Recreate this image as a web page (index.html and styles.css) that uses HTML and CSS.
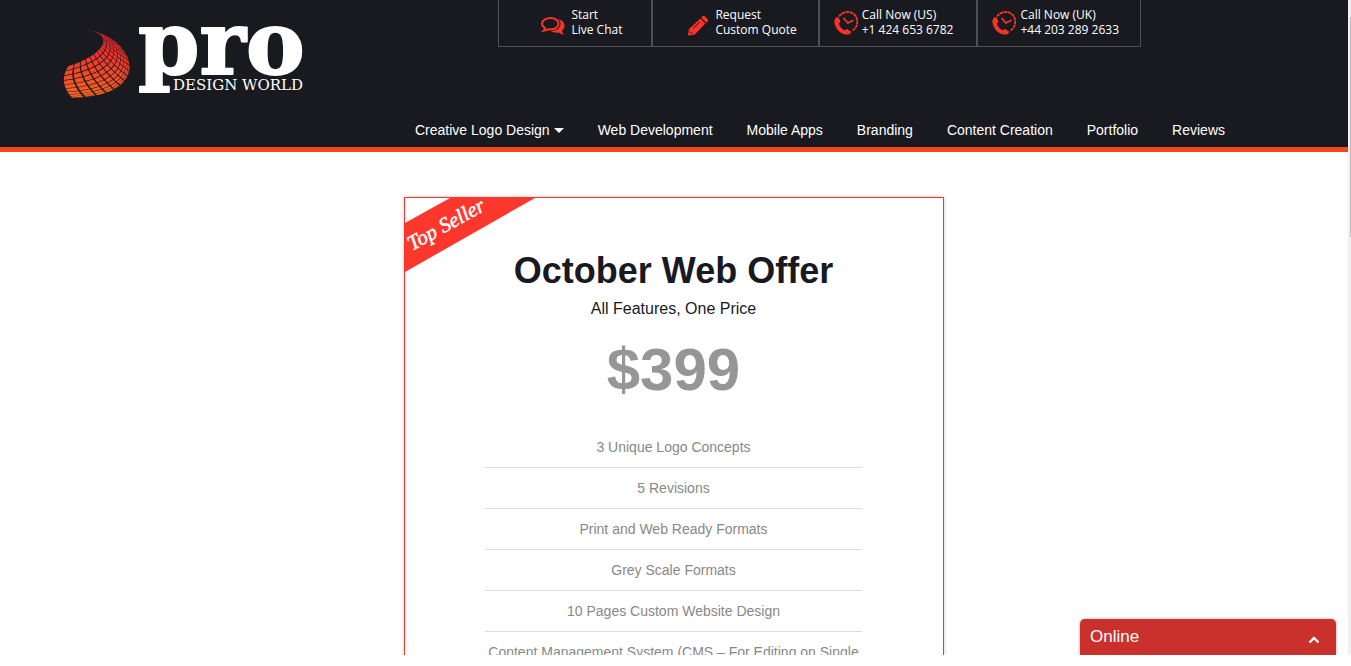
FILE: index.html
```html
<!DOCTYPE html>
<html lang="en">
<head>
<meta charset="utf-8">
<title>Pro Design World</title>
<link rel="stylesheet" href="styles.css">
</head>
<body>
<div class="frame">
  <div class="page">
    <header class="header">
      <a class="logo" href="#" aria-label="Pro Design World">
        <svg class="logo-art" width="250" height="85" viewBox="0 0 250 85">
          <defs>
            <linearGradient id="globe" gradientUnits="userSpaceOnUse" x1="0" y1="10" x2="0" y2="80">
              <stop offset="0" stop-color="#d81f2c"/>
              <stop offset="0.4" stop-color="#f4352a"/>
              <stop offset="1" stop-color="#f46a20"/>
            </linearGradient>
          </defs>
          <path id="globe-cells" fill="url(#globe)"/>
          <text class="logo-pro" x="77" y="54">pro</text>
          <text class="logo-sub" x="112" y="70">DESIGN WORLD</text>
        </svg>
      </a>
      <div class="header-right">
        <div class="contacts">
          <a class="contact contact-chat" href="#">
            <svg width="24" height="20" viewBox="0 0 24 20"><path d="M17 3c4 1 6.500 3.500 6.500 7 0 2-1 3.500-2.500 4.700.2 1.800 1 2.800 2 3.800-2 0-3.700-.6-5-2-3 .6-6 0-8-1.500 6 0 10-3.500 9.500-8C19.300 5.500 18.500 4 17 3z" fill="#fb3327"/><path d="M9.500 2C14 2 17.500 4.400 17.500 7.700S14 13.500 9.500 13.500c-.9 0-1.700-.1-2.500-.3-1.400 1-3 1.500-4.500 1.500 1-.9 1.500-1.700 1.600-2.700C2.200 10.900 1 9.500 1 7.700 1 4.400 5 2 9.500 2z" fill="#191a1f" stroke="#fb3327" stroke-width="2"/></svg>
            <span>Start<br>Live Chat</span>
          </a>
          <a class="contact contact-quote" href="#">
            <svg width="22" height="20" viewBox="0 0 22 20"><path d="m14.300 1.700 5 5 1-1c1-1 1-2 0-3L18 .6c-1-.9-2-.9-3 0zM13.400 2.600 2 13 1 19.500l6.600-.8L18.400 7.600z" fill="#fb3327"/><path d="m6 12.500 7-6.500M3 15.500l2.200 2.200" stroke="#191a1f" stroke-width="1"/></svg>
            <span>Request<br>Custom Quote</span>
          </a>
          <a class="contact contact-us" href="#">
            <svg width="24" height="24" viewBox="0 0 24 24"><use href="#phone-clock"/></svg>
            <span>Call Now (US)<br>+1 424 653 6782</span>
          </a>
          <a class="contact contact-uk" href="#">
            <svg width="24" height="24" viewBox="0 0 24 24"><g id="phone-clock"><path d="M2.200 6.500C.3 8 0 10.500.8 13.500 2.500 18.500 6 22 10.500 23.200c2.500.7 5 .4 6.200-1.200.6-.9.400-1.600-.4-2.100l-2.600-1.500c-.8-.5-1.500-.3-2 .4l-.7.700C8 18.300 5.600 15.600 4.800 12.500l.8-.6c.7-.4.9-1 .6-1.800L5.200 7.400C4.800 6.500 3.300 6 2.200 6.500z" fill="#fb3327"/><path d="M5 5.500C10-1.500 21-.2 23 8.500c1 5-1 9-4.500 11" fill="none" stroke="#fb3327" stroke-width="1.800" stroke-dasharray="3.500 .5"/><path d="m9.500 7 4.300 5 5.700-2.800" fill="none" stroke="#fb3327" stroke-width="1.800"/></g></svg>
            <span>Call Now (UK)<br>+44 203 289 2633</span>
          </a>
        </div>
        <nav class="nav">
          <a class="nav-drop" href="#">Creative Logo Design</a>
          <a href="#">Web Development</a>
          <a href="#">Mobile Apps</a>
          <a href="#">Branding</a>
          <a href="#">Content Creation</a>
          <a href="#">Portfolio</a>
          <a href="#">Reviews</a>
        </nav>
      </div>
    </header>
    <main class="main">
      <section class="offer">
        <svg class="ribbon" width="130" height="75" viewBox="0 0 130 75">
          <path d="M0 25 45 0h85L0 74z" fill="#fd372b"/>
          <text class="ribbon-text" transform="translate(7 53) rotate(-29)">Top Seller</text>
        </svg>
        <h1 class="offer-title">October Web Offer</h1>
        <p class="offer-sub">All Features, One Price</p>
        <p class="offer-price">$399</p>
        <ul class="features">
          <li>3 Unique Logo Concepts</li>
          <li>5 Revisions</li>
          <li>Print and Web Ready Formats</li>
          <li>Grey Scale Formats</li>
          <li>10 Pages Custom Website Design</li>
          <li>Content Management System (CMS – For Editing on Single</li>
        </ul>
      </section>
    </main>
  </div>
  <div class="scrollbar"><div class="scroll-thumb"></div></div>
  <button class="chat" type="button">Online
    <svg width="12" height="8" viewBox="0 0 12 8"><path d="m1.500 6.500 4.500-4.500 4.500 4.500" fill="none" stroke="#fff" stroke-width="2.400"/></svg>
  </button>
</div>
<script src="globe.js"></script>
</body>
</html>
```

FILE: styles.css
```css
* { box-sizing: border-box; }
body {
  margin: 0;
  height: 100vh;
  padding-bottom: 11px;
  background: #fff;
  font-family: "Liberation Sans", Arial, sans-serif;
}
a { color: #fff; text-decoration: none; }
.frame {
  position: relative;
  display: flex;
  height: 100%;
  overflow: hidden;
}
.page { flex: 1; min-width: 0; }
.scrollbar {
  width: 3px;
  padding: 17px 0 0 2px;
  background: #f0f0f0;
}
.scroll-thumb { height: 220px; background: #bdbdbd; }

.header {
  display: flex;
  justify-content: space-between;
  padding: 0 123px 0 61px;
  background: #191a1f;
  border-bottom: 5px solid #f34720;
}
.logo { padding-top: 20px; }
.logo-art { display: block; overflow: visible; }
.logo-pro {
  font: bold 88px "DejaVu Serif", serif;
  fill: #fff;
  stroke: #fff;
  stroke-width: 2px;
  stroke-linejoin: round;
}
.logo-sub { font: 15px "DejaVu Serif", serif; fill: #fff; }
.header-right {
  display: flex;
  flex-direction: column;
  align-items: flex-end;
  justify-content: space-between;
  height: 147px;
}
.contacts {
  display: flex;
  margin-right: 84px;
  border: 1px solid #505054;
  border-width: 0 1px 1px 0;
}
.contact {
  display: flex;
  align-items: center;
  gap: 6px;
  height: 46px;
  padding-bottom: 2px;
  border-left: 2px solid #505054;
  font: 12px/15px "Open Sans", "Noto Sans", sans-serif;
}
.contact-chat { padding-left: 42px; padding-right: 29px; border-left-width: 1px; }
.contact-quote { padding-left: 34px; padding-right: 21px; }
.contact-chat svg, .contact-quote svg { margin-top: 8px; }
.contact-us, .contact-uk { gap: 4px; padding-left: 14px; padding-right: 21px; }
.contact-us { padding-right: 23px; }
.contact-us svg, .contact-uk svg { margin-top: 2px; }
.nav {
  display: flex;
  gap: 34px;
  padding-bottom: 9px;
  font-size: 14px;
  line-height: 16px;
}
.nav-drop { display: flex; align-items: center; gap: 4px; }
.nav-drop::after {
  content: "";
  border: 5px solid transparent;
  border-top-color: #fff;
  border-bottom: 0;
}

.main { padding-top: 45px; }
.offer {
  position: relative;
  width: 40%;
  min-width: 540px;
  margin: 0 auto;
  padding: 52px 81px 0 80px;
  border: 1px solid #f4372d;
  box-shadow: 0 0 4px rgba(0, 0, 0, 0.2);
  text-align: center;
}
.ribbon { position: absolute; top: 0; left: 0; }
.ribbon-text {
  font: italic 21px "Liberation Serif", serif;
  fill: #fff;
  stroke: #fff;
  stroke-width: 0.5px;
}
.offer-title {
  margin: 0;
  color: #191a1f;
  font-size: 36px;
  line-height: 42px;
}
.offer-sub {
  margin: 8px 0 0;
  color: #191a1f;
  font-size: 16px;
  line-height: 18px;
}
.offer-price {
  margin: 18px 0 0;
  color: #969696;
  font-size: 60px;
  font-weight: bold;
  line-height: 68px;
}
.features {
  margin: 23px 0 0;
  padding: 0;
  list-style: none;
  color: #888;
  font-size: 14px;
  line-height: 20px;
}
.features li {
  padding: 10px 0;
  border-bottom: 1px solid #ddd;
  white-space: nowrap;
}

.chat {
  position: absolute;
  right: 15px;
  bottom: 0;
  display: flex;
  align-items: center;
  justify-content: space-between;
  width: 256px;
  height: 36px;
  padding: 0 16px 0 10px;
  border: 0;
  border-radius: 5px 5px 0 0;
  background: #ca302c;
  box-shadow: 0 0 3px rgba(0, 0, 0, 0.4);
  color: #fff;
  font: 17px/20px "Liberation Sans", Arial, sans-serif;
}
.chat svg { margin-top: 6px; }
```

FILE: globe.js
```js
// Builds the curved lattice of the globe mark from two families of curves.
(function () {
  var rows = 10, cols = 18;
  function bez(a, b, c, d, s) {
    var r = 1 - s;
    return r * r * r * a + 3 * r * r * s * b + 3 * r * s * s * c + s * s * s * d;
  }
  function point(u, v) {
    var t = Math.sin(u * Math.PI / 2);
    var s = 0.04 + 0.96 * v;
    var endX = 7 - 26 * t * (1 - t) + 3 * t;
    var endY = 46 + 32 * t;
    return [
      bez(23, 51 + 18 * t, 50 + 52 * t, endX, s),
      bez(10, 11, 32 + 44 * t, endY, s)
    ];
  }
  var d = "";
  for (var i = 0; i < rows; i++) {
    for (var j = 0; j < cols; j++) {
      var g = 0.08;
      var corners = [[g, g], [1 - g, g], [1 - g, 1 - g], [g, 1 - g]].map(function (c) {
        var p = point((i + c[0]) / rows, (j + c[1]) / cols);
        return p[0].toFixed(2) + " " + p[1].toFixed(2);
      });
      d += "M" + corners.join("L") + "Z";
    }
  }
  document.getElementById("globe-cells").setAttribute("d", d);
})();
```
